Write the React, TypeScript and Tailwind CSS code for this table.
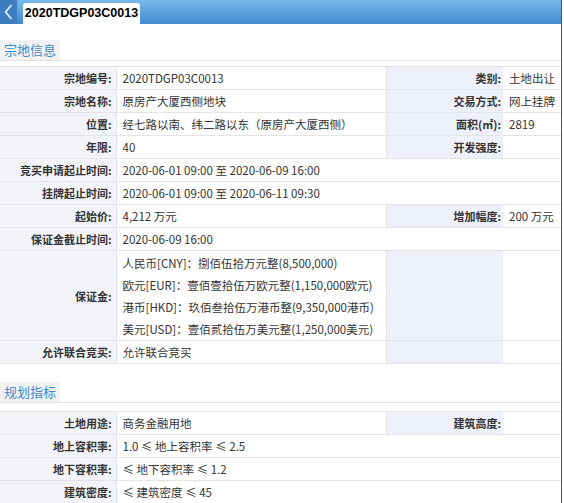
import React from "react";

type Row = {
  label: string;
  value: React.ReactNode;
  label2?: string;
  value2?: string;
  span?: boolean;
};

const siteRows: Row[] = [
  { label: "宗地编号", value: "2020TDGP03C0013", label2: "类别", value2: "土地出让" },
  { label: "宗地名称", value: "原房产大厦西侧地块", label2: "交易方式", value2: "网上挂牌" },
  { label: "位置", value: "经七路以南、纬二路以东（原房产大厦西侧）", label2: "面积(㎡)", value2: "2819" },
  { label: "年限", value: "40", label2: "开发强度", value2: "" },
  { label: "竞买申请起止时间", value: "2020-06-01 09:00 至 2020-06-09 16:00", span: true },
  { label: "挂牌起止时间", value: "2020-06-01 09:00 至 2020-06-11 09:30", span: true },
  { label: "起始价", value: "4,212 万元", label2: "增加幅度", value2: "200 万元" },
  { label: "保证金截止时间", value: "2020-06-09 16:00", span: true },
  {
    label: "保证金",
    value: (
      <div className="pt-[1px]">
        <div className="h-[22px] leading-[22px]">人民币[CNY]：捌佰伍拾万元整(8,500,000)</div>
        <div className="h-[22px] leading-[22px]">欧元[EUR]：壹佰壹拾伍万欧元整(1,150,000欧元)</div>
        <div className="h-[22px] leading-[22px]">港币[HKD]：玖佰叁拾伍万港币整(9,350,000港币)</div>
        <div className="h-[22px] leading-[22px]">美元[USD]：壹佰贰拾伍万美元整(1,250,000美元)</div>
      </div>
    ),
    label2: "",
    value2: "",
  },
  { label: "允许联合竞买", value: "允许联合竞买", label2: "", value2: "" },
];

const planRows: Row[] = [
  { label: "土地用途", value: "商务金融用地", label2: "建筑高度", value2: "" },
  { label: "地上容积率", value: "1.0 ≤ 地上容积率 ≤ 2.5", span: true },
  { label: "地下容积率", value: "≤ 地下容积率 ≤ 1.2", span: true },
  { label: "建筑密度", value: "≤ 建筑密度 ≤ 45", span: true },
];

function InfoTable({ rows }: { rows: Row[] }) {
  return (
    <table className="w-full table-fixed border-collapse text-[11.5px] leading-[14px] text-[#333]">
      <colgroup>
        <col className="w-[116px]" />
        <col className="w-[270px]" />
        <col className="w-[117px]" />
        <col />
      </colgroup>
      <tbody>
        {rows.map((r) => (
          <tr key={r.label} className="h-[23px] border-t border-b border-[#e4e4e4]">
            <td className="p-0 bg-[#f3f4f9] pr-[4px] text-right text-[11px] font-bold border-r border-[#e2e3ea] whitespace-nowrap">
              {r.label}:
            </td>
            {r.span ? (
              <td colSpan={3} className="p-0 pl-[6px] whitespace-nowrap">{r.value}</td>
            ) : (
              <>
                <td className="p-0 pl-[6px] whitespace-nowrap">{r.value}</td>
                <td className="p-0 bg-[#eef0fc] pr-[2px] text-right text-[11px] font-bold border-l border-[#e2e3ea] whitespace-nowrap">
                  {r.label2 ? `${r.label2}:` : ""}
                </td>
                <td className="p-0 pl-[6px] whitespace-nowrap">{r.value2}</td>
              </>
            )}
          </tr>
        ))}
      </tbody>
    </table>
  );
}

function SectionTitle({ title }: { title: string }) {
  return (
    <div className="border-b border-[#e2e2e2]">
      <div className="inline-block bg-[#f2f2f2] px-[4px] h-[20px] leading-[20px] text-[13px] text-[#3a8cc8]">
        {title}
      </div>
    </div>
  );
}

export default function App() {
  return (
    <div
      className="w-[562px] min-h-[503px] bg-white border-r border-[#555]"
      style={{ fontFamily: '"Noto Sans CJK SC", "Liberation Sans", sans-serif' }}
    >
      <div className="flex h-[24px] items-end bg-gradient-to-b from-[#7ab8ea] to-[#3f8bd0]">
        <div className="flex h-[24px] w-[17px] items-center justify-center bg-[#3b7fc2]">
          <svg width="9" height="16" viewBox="0 0 9 16">
            <path d="M7.5 1 L1.5 8 L7.5 15" fill="none" stroke="#fff" strokeWidth="1.4" />
          </svg>
        </div>
        <div
          className="ml-[6px] flex h-[21px] w-[117px] items-center justify-center rounded-t-[3px] bg-white text-[12.5px] font-bold text-black"
          style={{ fontFamily: '"Liberation Sans", sans-serif' }}
        >
          2020TDGP03C0013
        </div>
      </div>

      <div className="mt-[12px]">
        <SectionTitle title="宗地信息" />
      </div>
      <div className="mt-[5px]">
        <InfoTable rows={siteRows} />
      </div>

      <div className="mt-[14px]">
        <SectionTitle title="规划指标" />
      </div>
      <div className="mt-[8px]">
        <InfoTable rows={planRows} />
      </div>
    </div>
  );
}
